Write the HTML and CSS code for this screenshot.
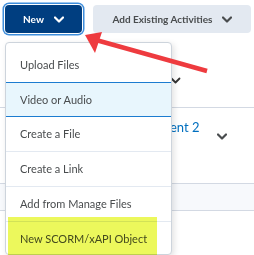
FILE: index.html
```html
<!DOCTYPE html>
<html lang="en">
<head>
    <meta charset="UTF-8">
    <title>New menu</title>
    <link rel="stylesheet" href="styles.css">
</head>
<body>
    <div class="toolbar">
        <button class="btn btn-new">New
            <svg class="chev" width="10" height="7" viewBox="0 0 10 7"><polyline points="1,1.5 5,5.5 9,1.5"/></svg>
        </button>
        <button class="btn btn-add">Add Existing Activities
            <svg class="chev" width="10" height="7" viewBox="0 0 10 7"><polyline points="1,1.5 5,5.5 9,1.5"/></svg>
        </button>
    </div>

    <!-- content behind the menu -->
    <div class="content">
        <div class="row row-first">
            <svg class="chev chev-small" width="11" height="7" viewBox="0 0 10 7"><polyline points="1,1.5 5,5.5 9,1.5"/></svg>
        </div>
        <div class="row row-second">
            <span class="row-title">Assignment 2</span>
            <svg class="chev chev-row" width="10" height="7" viewBox="0 0 10 7"><polyline points="1,1.5 5,5.5 9,1.5"/></svg>
        </div>
        <div class="band"></div>
    </div>

    <!-- dropdown menu -->
    <ul class="menu">
        <li class="menu-item">Upload Files</li>
        <li class="menu-item active">Video or Audio</li>
        <li class="menu-item">Create a File</li>
        <li class="menu-item">Create a Link</li>
        <li class="menu-item">Add from Manage Files</li>
        <li class="menu-item last">New SCORM/xAPI Object</li>
    </ul>
    <div class="highlight"></div>

    <!-- red annotation arrow -->
    <svg class="arrow" width="254" height="255" viewBox="0 0 254 255">
        <line x1="207" y1="71" x2="96" y2="40" />
        <polygon points="85,35 102,32 95,53" />
    </svg>
</body>
</html>
```

FILE: styles.css
```css
body {
    font-family: "Lato", "Liberation Sans", sans-serif;
    background-color: #fff;
    margin: 0;
    width: 254px;
    height: 255px;
    overflow: hidden;
    position: relative;
}
.toolbar {
    display: flex;
    gap: 11px;
    padding: 5px 0 0 5px;
}
.btn {
    display: flex;
    align-items: center;
    justify-content: center;
    height: 28px;
    border: none;
    border-radius: 4px;
    font-family: inherit;
    font-weight: 700;
    font-size: 10px;
    padding: 0;
}
.btn-new {
    width: 77px;
    background-color: #003e80;
    color: #fff;
    gap: 10px;
    box-shadow: 0 0 0 1px #fff, 0 0 0 2.5px #3e8edc;
}
.btn-new .chev polyline {
    stroke: #fff;
}
.btn-add {
    width: 158px;
    background-color: #e3e9f1;
    color: #494c4e;
    gap: 9px;
}
.chev polyline {
    fill: none;
    stroke: #494c4e;
    stroke-width: 2.2;
    stroke-linecap: round;
    stroke-linejoin: round;
}
.row {
    border-bottom: 1px solid #d3d9e3;
    display: flex;
}
.row-first {
    height: 74px;
    padding-left: 170px;
}
.chev-small {
    margin-top: 44px;
}
.row-first .chev polyline {
    stroke: #333;
    stroke-width: 1.8;
}
.row-second {
    height: 75px;
    padding-left: 122px;
}
.row-title {
    color: #006fbf;
    font-size: 13px;
    margin-top: 11px;
    height: 16px;
}
.chev-row {
    margin: 25px 0 0 18px;
}
.band {
    height: 26px;
    background-color: #f7f9fc;
    border-bottom: 1px solid #d3d9e3;
}
.menu {
    position: absolute;
    left: 5px;
    top: 42px;
    width: 167px;
    height: 213px;
    box-sizing: border-box;
    overflow: hidden;
    margin: 0;
    padding: 5px 0 0;
    list-style: none;
    background-color: #fff;
    border: 1px solid #cdd4dc;
    border-radius: 4px;
    box-shadow: 2px 2px 6px rgba(0, 0, 0, 0.12);
}
.menu-item {
    height: 34px;
    line-height: 34px;
    padding-left: 14px;
    font-size: 11px;
    color: #494c4e;
    border-bottom: 1px solid #e3e9f1;
}
.menu-item.active {
    height: 33px;
    line-height: 33px;
    background-color: #e8f6fd;
    border-top: 1px solid #1c7cd0;
    border-bottom: 1px solid #1c7cd0;
    margin-top: -1px;
}
.menu-item.last {
    border-bottom: none;
}
.highlight {
    position: absolute;
    left: 8px;
    top: 217px;
    width: 149px;
    height: 38px;
    background-color: #ecf85c;
    mix-blend-mode: multiply;
}
.arrow {
    position: absolute;
    left: 0;
    top: 0;
}
.arrow line {
    stroke: #ee3b3f;
    stroke-width: 4.5;
}
.arrow polygon {
    fill: #ee3b3f;
}
```
